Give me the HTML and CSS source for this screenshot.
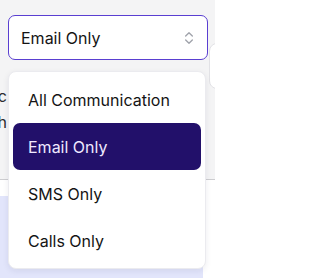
FILE: index.html
```html
<!DOCTYPE html>
<html lang="en">
<head>
<meta charset="utf-8">
<title>Select</title>
<link rel="stylesheet" href="styles.css">
</head>
<body>
<div class="page">
  <header class="header">
    <div class="peek">
      <div class="peek-line">Marketing sync</div>
      <div class="peek-line">Each month</div>
    </div>
    <div class="select">
      <span class="select-value">Email Only</span>
      <svg class="select-icon" width="16" height="16" viewBox="0 0 24 24" fill="none" stroke="currentColor" stroke-width="2" stroke-linecap="round" stroke-linejoin="round"><path d="m7 15 5 5 5-5"/><path d="m7 9 5-5 5 5"/></svg>
    </div>
    <div class="side-card"></div>
  </header>
  <main class="content">
    <div class="band"></div>
  </main>
  <ul class="menu">
    <li class="menu-item">All Communication</li>
    <li class="menu-item is-active">Email Only</li>
    <li class="menu-item">SMS Only</li>
    <li class="menu-item">Calls Only</li>
  </ul>
</div>
</body>
</html>
```

FILE: styles.css
```css
* { box-sizing: border-box; }
html, body {
  margin: 0;
  padding: 0;
  width: 215px;
  height: 278px;
  overflow: hidden;
  background: #ffffff;
  font-family: Inter, "Noto Sans", sans-serif;
}
.page {
  position: relative;
  width: 215px;
  height: 278px;
  overflow: hidden;
}
.header {
  height: 180px;
  background: #f4f4f5;
  border-bottom: 1px solid #cdcdd0;
  padding-top: 15px;
  display: grid;
  grid-template-columns: 7px 200px 1fr;
  column-gap: 1px;
  align-items: start;
}
.peek {
  margin-top: 68px;
  overflow: hidden;
  width: 7px;
}
.peek-line {
  display: flex;
  justify-content: flex-end;
  white-space: nowrap;
  font-size: 16px;
  line-height: 26px;
  color: #2b2b2e;
}
.select {
  height: 45px;
  background: #ffffff;
  border: 1px solid #5a3fd1;
  border-radius: 7px;
  display: flex;
  align-items: center;
  justify-content: space-between;
  padding: 0 10px 0 12px;
}
.select-value {
  font-size: 16px;
  color: #141414;
}
.select-icon {
  color: #a0a3ab;
  display: block;
}
.side-card {
  margin-top: 28px;
  width: 30px;
  height: 46px;
  background: #ffffff;
  border: 1px solid #e2e2e6;
  border-radius: 8px;
}
.content {
  padding-top: 16px;
  padding-right: 12px;
}
.band {
  height: 100px;
  background: #e2e5fb;
}
.menu {
  position: absolute;
  left: 8px;
  top: 71px;
  width: 198px;
  margin: 0;
  padding: 4px;
  list-style: none;
  background: #ffffff;
  border: 1px solid #ebebef;
  border-radius: 8px;
  box-shadow: 0 2px 6px rgba(30, 30, 60, 0.08);
}
.menu-item {
  height: 47px;
  display: flex;
  align-items: center;
  padding-left: 15px;
  font-size: 16px;
  color: #141414;
  border-radius: 7px;
}
.menu-item.is-active {
  background: #22106a;
  color: #efeaff;
}
```
